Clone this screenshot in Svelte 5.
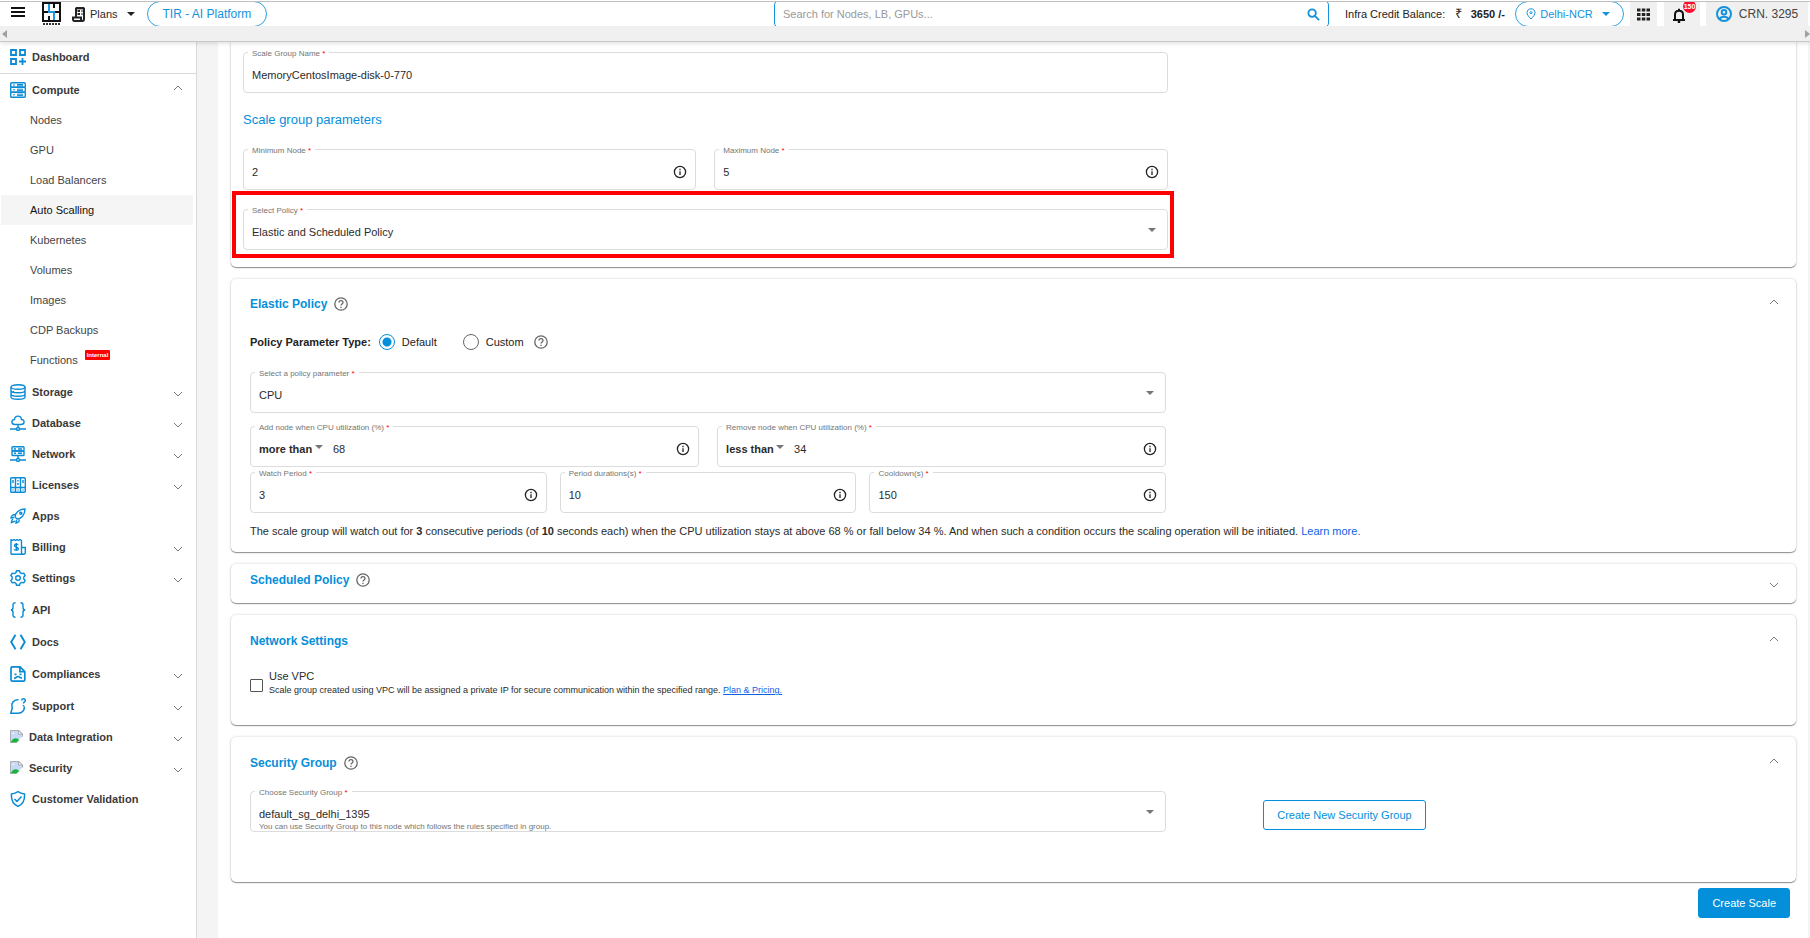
<script lang="ts">
	type NavItem = {
		label: string;
		icon: string;
		open?: boolean;
		closed?: boolean;
		tall?: boolean;
		divider?: boolean;
		children?: string[];
	};

	const nav: NavItem[] = [
		{ label: 'Dashboard', icon: 'dashboard', divider: true },
		{
			label: 'Compute',
			icon: 'compute',
			open: true,
			children: [
				'Nodes',
				'GPU',
				'Load Balancers',
				'Auto Scalling',
				'Kubernetes',
				'Volumes',
				'Images',
				'CDP Backups',
				'Functions'
			]
		},
		{ label: 'Storage', icon: 'storage', closed: true },
		{ label: 'Database', icon: 'database', closed: true },
		{ label: 'Network', icon: 'network', closed: true },
		{ label: 'Licenses', icon: 'licenses', closed: true },
		{ label: 'Apps', icon: 'apps' },
		{ label: 'Billing', icon: 'billing', closed: true },
		{ label: 'Settings', icon: 'settings', closed: true },
		{ label: 'API', icon: 'api', tall: true },
		{ label: 'Docs', icon: 'docs' },
		{ label: 'Compliances', icon: 'compliances', closed: true, tall: true },
		{ label: 'Support', icon: 'support', closed: true },
		{ label: 'Data Integration', icon: 'broken', closed: true },
		{ label: 'Security', icon: 'broken', closed: true },
		{ label: 'Customer Validation', icon: 'validation' }
	];

	const icons: Record<string, string> = {
		dashboard:
			'<path d="M1 1h5v5H1zM10 1h5v5h-5zM1 10h5v5H1zM12.5 9v7M9 12.5h7" stroke-width="1.8"/>',
		compute:
			'<rect x=".7" y=".7" width="14.6" height="4.6" rx="1"/><rect x=".7" y="5.3" width="14.6" height="5" rx="1"/><rect x=".7" y="10.3" width="14.6" height="5" rx="1"/><path d="M3 3h2M7 2.5h6M7 3.8h6M3 7.8h2M7 7.2h6M7 8.6h6M3 12.8h2M7 12.2h6M7 13.6h6" stroke-width="1"/>',
		storage:
			'<ellipse cx="8" cy="3" rx="7" ry="2.3"/><path d="M1 3v10c0 1.3 3.1 2.3 7 2.3s7-1 7-2.3V3M1 6.5c0 1.3 3.1 2.3 7 2.3s7-1 7-2.3M1 10c0 1.3 3.1 2.3 7 2.3s7-1 7-2.3M3.500 7v1M3.500 11v1"/>',
		database:
			'<path d="M5 9.500c-4 0-4-5-.5-5C5 0 11 0 11.500 4.500c3.500 0 3.500 5-.5 5zM8 9.500v3M0 14h6M10 14h6"/><circle cx="8" cy="14" r="1.500"/>',
		network:
			'<rect x="2" y=".7" width="12" height="4.3" rx=".8"/><rect x="2" y="5" width="12" height="4.500" rx=".8"/><path d="M4 3h2M8 3h4M4 7.300h2M8 7.300h4M8 9.500v3M0 14h6M10 14h6"/><circle cx="8" cy="14" r="1.500"/>',
		licenses:
			'<rect x=".7" y=".7" width="14.6" height="14.6" rx="1"/><path d="M5.500 1v14M10.500 1v14M1 10.500h14M3 3v3M8 3v1.500M13 3v3M8 6v2M3 12.500v1M8 12.500v1M13 12.500v1"/>',
		apps:
			'<path d="M5 9c0-4 4-8 10-8 0 6-4 10-8 10zM5.500 7C3 6 1.500 7.500 1 10l3-.5M9 10.500c1 2.500-.5 4-3 4.500l.5-3M3 11c-1.500 1-1 2-1.500 3.500C3 14 4 14 5 13"/><circle cx="10.8" cy="5.2" r="1"/>',
		billing:
			'<path d="M1 .5l1.500 1L4 .5l1.500 1L7 .5l1.500 1 1.500-1 1.500 1V15.300H2c-.7 0-1-.4-1-1zM11.500 8.500h3.800v5.300c0 1-.6 1.500-1.900 1.500s-1.900-.7-1.900-1.500M8.200 5.800c-.5-1-3.700-1-3.700.6S8.400 8 8.400 9.800s-3.600 1.800-4.200.4M6.300 4v8"/>',
		settings:
			'<path d="M6.500.7h3l.6 2 1.500.9 2.100-.5 1.500 2.500L13.800 7v2l1.400 1.400-1.500 2.500-2.100-.5-1.500.9-.6 2h-3l-.6-2-1.500-.9-2.100.5L.8 10.400 2.200 9V7L.8 5.600l1.500-2.500 2.100.5 1.500-.9z" stroke-linejoin="round"/><circle cx="8" cy="8" r="2.300"/>',
		api:
			'<path d="M5.500.7C3.500.7 3 1.500 3 3v2.500C3 7 2.500 8 .8 8 2.500 8 3 9 3 10.500V13c0 1.500.5 2.300 2.500 2.300M10.500.7c2 0 2.500.8 2.500 2.300v2.500C13 7 13.500 8 15.200 8 13.500 8 13 9 13 10.500V13c0 1.500-.5 2.300-2.500 2.300"/>',
		docs: '<path d="M5.500.7L1.200 8l4.300 7.300M10.500.7L14.800 8l-4.300 7.300" stroke-width="1.9"/>',
		compliances:
			'<path d="M2.500.8h7.500l4.800 4.700v8.200c0 1-.5 1.500-1.500 1.500H2.500c-1 0-1.500-.5-1.500-1.500V2.300C1 1.300 1.500.8 2.500.8zM9.800 1v4.700h5M4.500 8.300h2M9.500 8.300h2M4 12.300c2.500-.2 2.500-1.800 4-1.800s1.500 1.600 4 1.600" stroke-width="1.7"/>',
		support:
			'<path d="M8.500 1.700C3.500 1.200.8 5.500 2.300 10l-1.500 5.200H8c4.200 0 6.800-3 6.200-6.700M11.700 2.500c.2-2.200 3.600-2.200 3.600 0 0 1.500-1.800 1.400-1.800 2.900M13.500 7v1.200" stroke-width="1.500"/>',
		broken:
			'<path d="M.5.5h10L15.500 5v10.500H.5z" fill="#c6daf7" stroke="#9a9a9a" stroke-width="1"/><path d="M2 4.500c1-1.500 3-1.500 4 0z" fill="#fff" stroke="none"/><path d="M1 15c1-3 3.500-5 6-5 2 0 3.500 1 4.500 2L8 15z" fill="#17b53a" stroke="none"/><path d="M8 16l8-6.500V16z" fill="#fff" stroke="none"/><path d="M11 12.500L16 8.500" stroke="#fff" stroke-width="1.500"/><path d="M10.500.5V5h5z" fill="#fff" stroke="#9a9a9a" stroke-width="1"/>',
		validation:
			'<path d="M8 .7c2 1.500 4 2 6.500 2.200.5 5.600-1 10-6.500 12.500C2.500 12.900 1 8.500 1.500 2.900 4 2.700 6 2.200 8 .7zM4.500 8l2.500 2.500 4.500-5" stroke-width="1.500"/>'
	};

	let addOperator = 'more than';
	let removeOperator = 'less than';
	let parameterType = 'default';
	let useVpc = false;
</script>

{#snippet chevron(up: boolean)}
	<svg class="chevron" class:up viewBox="0 0 10 6" aria-hidden="true">
		<path d={up ? 'M1 5l4-4 4 4' : 'M1 1l4 4 4-4'} />
	</svg>
{/snippet}

{#snippet caret()}
	<svg class="caret" viewBox="0 0 8 4" aria-hidden="true"><path d="M0 0h8L4 4z" /></svg>
{/snippet}

{#snippet info()}
	<svg class="info" viewBox="0 0 14 14" aria-hidden="true">
		<circle cx="7" cy="7" r="5.600" />
		<path d="M7 6.200v3.800M7 3.800v1.400" />
	</svg>
{/snippet}

{#snippet help()}
	<svg class="help" viewBox="0 0 14 14" aria-hidden="true">
		<circle cx="7" cy="7" r="6.200" />
		<path d="M5 5.600c0-2.600 4-2.600 4 0C9 7 7 7 7 8.500M7 9.800V11" />
	</svg>
{/snippet}

{#snippet textField(id: string, label: string, value: string, hasInfo: boolean)}
	<div class="field">
		<label for={id}>{label} <span>*</span></label>
		<input {id} type="text" {value} />
		{#if hasInfo}{@render info()}{/if}
	</div>
{/snippet}

{#snippet selectField(id: string, label: string, value: string)}
	<div class="field">
		<label for={id}>{label} <span>*</span></label>
		<select {id}><option>{value}</option></select>
		{@render caret()}
	</div>
{/snippet}

<header>
	<div class="toolbar">
		<button class="menu" aria-label="Menu">
			<svg viewBox="0 0 14 12"><path d="M0 2h14M0 6h14M0 10h14" /></svg>
		</button>
		<a class="logo" href="/" aria-label="Home">
			<svg viewBox="0 0 20 24">
				<path d="M1 1h17v18H1zM1 10h6M12 10h6M12 1v5M7 14v5" stroke="#111" stroke-width="2" />
				<path d="M7 2v8h5v8" stroke="#1a9be0" stroke-width="2" />
				<path d="M1 22h17" stroke="#333" stroke-width="2" stroke-dasharray="2 1" />
			</svg>
		</a>
		<button class="plans">
			<svg viewBox="0 0 13 15">
				<path d="M4 10V1.500l1-.8 1 .8 1-.8 1 .8 1-.8 1 .8 1-.8 1 .8V12c0 1.500-.5 2-1.500 2H2.500C1.500 14 1 13 1 12v-1.500h8V12c0 1 .5 2 1.500 2M5.500 4H8M9.500 4h1M5.500 7H8M9.500 7h1" />
			</svg>
			Plans
			{@render caret()}
		</button>
		<a class="pill tir" href="/tir">TIR - AI Platform</a>
		<div class="search">
			<input type="search" aria-label="Search" placeholder="Search for Nodes, LB, GPUs..." />
			<svg viewBox="0 0 14 14"><circle cx="5.500" cy="5.500" r="4" /><path d="M8.500 8.500L13 13" /></svg>
		</div>
		<div class="balance">
			<span>Infra Credit Balance:</span>
			<span class="rupee">₹</span>
			<b>3650 /-</b>
		</div>
		<button class="pill region">
			<svg class="pin" viewBox="0 0 10 12">
				<path d="M5 11C2.500 8.500 1 6.500 1 4.700 1 2.300 2.800.8 5 .8s4 1.500 4 3.900C9 6.500 7.500 8.500 5 11z" />
				<circle cx="5" cy="4.700" r="1" />
			</svg>
			Delhi-NCR
			{@render caret()}
		</button>
		<button class="tile grid" aria-label="Applications">
			<svg viewBox="0 0 13 13">
				<path d="M0 2h3.500M4.800 2h3.500M9.500 2H13M0 6.500h3.500M4.800 6.500h3.500M9.500 6.500H13M0 11h3.500M4.800 11h3.500M9.500 11H13" />
			</svg>
		</button>
		<button class="tile bell" aria-label="Notifications">
			<svg viewBox="0 0 12 15">
				<path d="M0 12h12M2 12V6.500C2 1.500 10 1.500 10 6.500V12M6 .7V3M4.800 14h2.400" />
			</svg>
			<span class="count">150</span>
		</button>
		<button class="tile account">
			<svg viewBox="0 0 16 16">
				<circle cx="8" cy="8" r="7" />
				<circle cx="8" cy="6.300" r="2.300" />
				<path d="M3.500 13c1.500-3 7.500-3 9 0" />
			</svg>
			CRN. 3295
		</button>
	</div>
	<div class="scrollbar">
		<svg viewBox="0 0 5 8"><path d="M5 0v8L0 4z" /></svg>
		<svg viewBox="0 0 5 8"><path d="M0 0v8l5-4z" /></svg>
	</div>
</header>

<div class="layout">
	<nav>
		<ul>
			{#each nav as item}
				<li>
					<a class="item" class:tall={item.tall} class:divider={item.divider} href="/{item.icon}">
						<svg class="icon" class:broken={item.icon === 'broken'} viewBox="0 0 16 16" aria-hidden="true">
							{@html icons[item.icon]}
						</svg>
						{item.label}
						{#if item.open}{@render chevron(true)}{/if}
						{#if item.closed}{@render chevron(false)}{/if}
					</a>
					{#if item.children}
						<ul class="children">
							{#each item.children as child}
								<li>
									<a class="child" class:active={child === 'Auto Scalling'} href="/compute">
										{child}
										{#if child === 'Functions'}<span class="internal">Internal</span>{/if}
									</a>
								</li>
							{/each}
						</ul>
					{/if}
				</li>
			{/each}
		</ul>
	</nav>

	<main>
		<section class="card group">
			<div class="column">
				{@render textField('group-name', 'Scale Group Name', 'MemoryCentosImage-disk-0-770', false)}
				<h2 class="plain">Scale group parameters</h2>
				<div class="row wide">
					{@render textField('min-node', 'Minimum Node', '2', true)}
					{@render textField('max-node', 'Maximum Node', '5', true)}
				</div>
				<div class="highlight">
					{@render selectField('policy', 'Select Policy', 'Elastic and Scheduled Policy')}
				</div>
			</div>
		</section>

		<section class="card elastic">
			<div class="heading">
				<h2>Elastic Policy</h2>
				{@render help()}
				<button class="toggle" aria-label="Collapse Elastic Policy">{@render chevron(true)}</button>
			</div>
			<div class="types">
				<b>Policy Parameter Type:</b>
				<label><input type="radio" value="default" bind:group={parameterType} />Default</label>
				<label><input type="radio" value="custom" bind:group={parameterType} />Custom</label>
				{@render help()}
			</div>
			<div class="column">
				{@render selectField('parameter', 'Select a policy parameter', 'CPU')}
				<div class="row wide utilization">
					<div class="field">
						<label for="add-node">Add node when CPU utilization (%) <span>*</span></label>
						<select class="operator" aria-label="Add operator" bind:value={addOperator}>
							<option>more than</option>
						</select>
						{@render caret()}
						<input id="add-node" class="after" type="text" value="68" />
						{@render info()}
					</div>
					<div class="field">
						<label for="remove-node">Remove node when CPU utilization (%) <span>*</span></label>
						<select class="operator" aria-label="Remove operator" bind:value={removeOperator}>
							<option>less than</option>
						</select>
						{@render caret()}
						<input id="remove-node" class="after" type="text" value="34" />
						{@render info()}
					</div>
				</div>
				<div class="row periods">
					{@render textField('watch', 'Watch Period', '3', true)}
					{@render textField('duration', 'Period durations(s)', '10', true)}
					{@render textField('cooldown', 'Cooldown(s)', '150', true)}
				</div>
			</div>
			<p>
				The scale group will watch out for <b>3</b> consecutive periods (of <b>10</b> seconds each) when the
				CPU utilization stays at above 68 % or fall below 34 %. And when such a condition occurs the scaling
				operation will be initiated. <a href="/learn-more">Learn more.</a>
			</p>
		</section>

		<section class="card scheduled">
			<div class="heading">
				<h2>Scheduled Policy</h2>
				{@render help()}
				<button class="toggle low" aria-label="Expand Scheduled Policy">{@render chevron(false)}</button>
			</div>
		</section>

		<section class="card network">
			<div class="heading">
				<h2>Network Settings</h2>
				<button class="toggle" aria-label="Collapse Network Settings">{@render chevron(true)}</button>
			</div>
			<div class="vpc">
				<input id="vpc" type="checkbox" bind:checked={useVpc} />
				<div>
					<label for="vpc">Use VPC</label>
					<small>
						Scale group created using VPC will be assigned a private IP for secure communication within the
						specified range. <a href="/pricing">Plan &amp; Pricing.</a>
					</small>
				</div>
			</div>
		</section>

		<section class="card security">
			<div class="heading">
				<h2>Security Group</h2>
				{@render help()}
				<button class="toggle" aria-label="Collapse Security Group">{@render chevron(true)}</button>
			</div>
			<div class="choose">
				<div class="column">
					{@render selectField('security-group', 'Choose Security Group', 'default_sg_delhi_1395')}
					<small class="hint">You can use Security Group to this node which follows the rules specified in group.</small>
				</div>
				<button class="outline">Create New Security Group</button>
			</div>
		</section>

		<div class="actions">
			<button class="primary">Create Scale</button>
		</div>
	</main>
</div>

<style>
	:global(body) {
		margin: 0;
		background: #fff;
		color: #2b2b2b;
		font: 11px/14px 'Liberation Sans', Arial, sans-serif;
	}
	* {
		box-sizing: border-box;
	}
	button,
	input,
	select {
		margin: 0;
		padding: 0;
		border: 0;
		outline: 0;
		background: none;
		color: inherit;
		font: inherit;
	}
	a {
		color: inherit;
		text-decoration: none;
	}
	svg {
		flex: none;
		fill: none;
		stroke: currentColor;
	}
	ul {
		margin: 0;
		padding: 0;
		list-style: none;
	}

	.caret {
		width: 8px;
		height: 4px;
		fill: #757575;
		stroke: none;
	}
	.chevron {
		width: 10px;
		height: 6px;
		color: #777;
	}

	/* top bar */
	header {
		position: relative;
		z-index: 1;
		padding-top: 1px;
		border-bottom: 1px solid #c8c8c8;
		box-shadow: 0 1px 5px rgba(0, 0, 0, 0.15);
	}
	.toolbar {
		display: flex;
		align-items: center;
		height: 25px;
		padding: 0 2px 0 11px;
		border-top: 1px solid #c0c0c0;
		background: #fff;
		overflow: hidden;
	}
	.toolbar > * {
		display: flex;
		align-items: center;
		flex: none;
	}
	.menu {
		padding-bottom: 4px;
	}
	.menu svg {
		width: 14px;
		height: 12px;
		color: #111;
		stroke-width: 2;
	}
	.logo {
		margin: 0 10px 0 17px;
	}
	.logo svg {
		width: 20px;
		height: 24px;
	}
	.plans {
		gap: 5px;
		font-size: 11px;
	}
	.plans svg:first-child {
		width: 13px;
		height: 15px;
		color: #222;
		stroke-width: 2;
	}
	.plans .caret {
		margin-left: 4px;
		fill: #222;
	}
	.pill {
		height: 26px;
		border: 1px solid #2a9fdd;
		border-radius: 13px;
		color: #1592dc;
		justify-content: center;
	}
	.tir {
		margin-left: 12px;
		padding: 0 15px;
		font-size: 12px;
	}
	.toolbar .search {
		flex: 0 1 555px;
		height: 28px;
		margin-left: auto;
		padding: 0 8px;
		border: 1px solid #1592dc;
		border-radius: 5px;
	}
	.search input {
		flex: 1;
	}
	.search input::placeholder {
		color: #999;
	}
	.search svg {
		width: 13px;
		height: 13px;
		color: #1592dc;
		stroke-width: 2;
	}
	.balance {
		justify-content: space-between;
		width: 160px;
		margin: 0 10px 0 16px;
		color: #222;
	}
	.rupee {
		font-size: 13px;
	}
	.region {
		gap: 4px;
		width: 109px;
		padding-right: 3px;
	}
	.region .pin {
		width: 10px;
		height: 12px;
	}
	.region .caret {
		margin-left: 5px;
		fill: #1592dc;
	}
	.tile {
		justify-content: center;
		height: 24px;
		background: #f0f0f0;
	}
	.grid {
		width: 27px;
		margin: 0 7px 0 6px;
	}
	.grid svg {
		width: 13px;
		height: 13px;
		color: #222;
		stroke-width: 3;
	}
	.bell {
		position: relative;
		width: 36px;
		padding: 3px 6px 0 0;
	}
	.bell svg {
		width: 12px;
		height: 15px;
		color: #111;
		stroke-width: 2;
	}
	.count {
		position: absolute;
		top: -2px;
		right: 4px;
		width: 13px;
		height: 13px;
		border-radius: 50%;
		background: #ff0a2f;
		color: #fff;
		font: bold 7px/13px 'Liberation Sans', Arial, sans-serif;
	}
	.account {
		gap: 7px;
		width: 102px;
		margin-left: 6px;
		color: #444;
		font-size: 12px;
	}
	.account svg {
		width: 16px;
		height: 16px;
		color: #1592dc;
		stroke-width: 2;
	}
	.scrollbar {
		display: flex;
		align-items: center;
		justify-content: space-between;
		height: 15px;
		padding-left: 2px;
		background: #f0f0f0;
	}
	.scrollbar svg {
		width: 5px;
		height: 8px;
		fill: #a0a0a0;
		stroke: none;
	}

	/* side navigation */
	.layout {
		display: flex;
		min-height: calc(100vh - 42px);
	}
	nav {
		flex: none;
		width: 197px;
		border-right: 1px solid #dadada;
	}
	.item {
		display: flex;
		align-items: center;
		gap: 6px;
		height: 31px;
		padding: 0 13px 0 10px;
		color: #3a3a3a;
		font-weight: bold;
	}
	.tall {
		height: 33px;
	}
	.divider {
		height: 32px;
		padding-bottom: 1px;
		border-bottom: 1px solid #dadada;
	}
	.icon {
		width: 16px;
		height: 16px;
		color: #0a8bd6;
		stroke-width: 1.4;
	}
	.broken {
		width: 13px;
		height: 13px;
	}
	.item .chevron {
		margin: 4px 0 0 auto;
	}
	.item .up {
		margin: -4px 0 0 auto;
	}
	.children {
		padding-bottom: 1px;
	}
	.child {
		display: flex;
		align-items: center;
		gap: 7px;
		height: 30px;
		margin: 0 3px 0 1px;
		padding-left: 29px;
		color: #444;
	}
	.active {
		background: #f5f5f5;
		color: #111;
	}
	.internal {
		align-self: flex-start;
		margin-top: 5px;
		padding: 0 2px;
		border-radius: 1px;
		background: #f00;
		color: #fff;
		font: bold 6px/10px 'Liberation Sans', Arial, sans-serif;
	}

	/* content */
	main {
		flex: 1;
		min-width: 0;
		margin-right: 2px;
		padding: 0 12px 20px 13px;
		border-left: 21px solid #f4f4f4;
		box-shadow: 2px 0 #f5f5f5;
	}
	.card {
		margin-bottom: 12px;
		padding: 17px 19px;
		border-radius: 5px;
		box-shadow:
			0 1px 1px rgba(0, 0, 0, 0.4),
			0 0 3px rgba(0, 0, 0, 0.18);
	}
	.group {
		padding: 10px 12px 9px;
		border-radius: 0 0 5px 5px;
	}
	.elastic {
		padding-bottom: 14px;
	}
	.column {
		width: 60%;
	}
	h2 {
		margin: 0;
		color: #048fdb;
		font-size: 12px;
		line-height: 16px;
	}
	.plain {
		margin: 19px 0 21px;
		font-size: 13px;
		font-weight: normal;
	}
	.heading {
		display: flex;
		align-items: center;
		gap: 7px;
	}
	.help {
		width: 14px;
		height: 14px;
		color: #666;
		stroke-width: 1.3;
	}
	.toggle {
		display: flex;
		margin: -4px -2px 0 auto;
	}
	.low {
		margin-top: 10px;
	}
	.field {
		position: relative;
		display: flex;
		align-items: center;
		flex: 1;
		min-width: 0;
		height: 41px;
		padding: 5px 8px 0;
		border: 1px solid #dcdcdc;
		border-radius: 4px;
	}
	.field label {
		position: absolute;
		top: -4px;
		left: 4px;
		padding: 0 4px;
		background: #fff;
		color: #757575;
		font-size: 8px;
		line-height: 10px;
	}
	.field label span {
		color: #f00;
	}
	.field input,
	.field select {
		flex: 1;
		min-width: 0;
		height: 16px;
	}
	.field .caret {
		margin: 0 3px 4px 0;
	}
	select {
		appearance: none;
	}
	.field .operator {
		flex: none;
		margin-right: 2px;
		font-weight: bold;
	}
	.field .after {
		margin-left: 7px;
	}
	.info {
		width: 14px;
		height: 14px;
		color: #222;
		stroke-width: 1.3;
	}
	.row {
		display: flex;
		gap: 13px;
	}
	.wide {
		gap: 18px;
	}
	.highlight {
		margin: 1px -6px 0 -11px;
		padding: 14px 2px 4px 7px;
		border: 4px solid #f00;
	}
	.types {
		display: flex;
		align-items: center;
		margin: 22px 0;
		color: #222;
	}
	.types label {
		display: flex;
		align-items: center;
		gap: 7px;
		margin: 0 18px 0 8px;
	}
	.types .help {
		margin-left: -8px;
	}
	input[type='radio'] {
		appearance: none;
		width: 16px;
		height: 16px;
		border: 1px solid #666;
		border-radius: 50%;
	}
	input[type='radio']:checked {
		border-color: #048fdb;
		background: radial-gradient(#048fdb 4px, transparent 5px);
	}
	.utilization {
		margin: 13px 0 5px;
	}
	p {
		margin: 11px 0 0;
	}
	p a {
		color: #0d62e6;
	}
	.scheduled {
		height: 39px;
		padding-top: 8px;
	}
	.scheduled .heading {
		height: 16px;
	}
	.network {
		padding-top: 18px;
	}
	.vpc {
		display: flex;
		align-items: center;
		gap: 6px;
		margin: 20px 0 11px;
	}
	.vpc label,
	.vpc small {
		display: block;
		font-size: 11px;
		line-height: 14px;
	}
	.vpc small {
		font-size: 9px;
	}
	.vpc a {
		color: #0d62e6;
		text-decoration: underline;
	}
	input[type='checkbox'] {
		appearance: none;
		width: 13px;
		height: 13px;
		margin-top: 4px;
		border: 1px solid #555;
		border-radius: 1px;
	}
	.security {
		margin-bottom: 6px;
		padding: 18px 19px 49px;
	}
	.choose {
		display: flex;
		align-items: flex-start;
		margin-top: 20px;
	}
	.choose .field {
		padding-top: 4px;
	}
	.hint {
		display: block;
		margin: -11px 9px 0;
		color: #757575;
		font-size: 8px;
		line-height: 12px;
	}
	.outline,
	.primary {
		height: 30px;
		padding: 0 13px;
		border: 1px solid #048fdb;
		border-radius: 3px;
		color: #048fdb;
	}
	.outline {
		margin: 9px 0 0 97px;
	}
	.primary {
		background: #048fdb;
		color: #fff;
	}
	.actions {
		display: flex;
		justify-content: flex-end;
		padding-right: 6px;
	}
</style>
